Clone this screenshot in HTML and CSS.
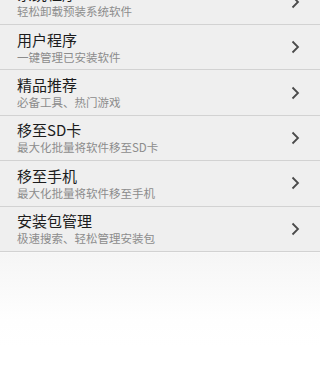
FILE: index.html
```html
<!DOCTYPE html>
<html>
<head>
    <meta charset="utf-8" />
    <title>软件管理</title>
    <link rel="stylesheet" href="styles.css">
</head>
<body>
<div class="page">
    <ul class="menu">
        <li class="menu-item">
            <div class="item-text">
                <div class="item-title">系统程序</div>
                <div class="item-desc">轻松卸载预装系统软件</div>
            </div>
            <svg class="arrow" width="9" height="14" viewBox="0 0 9 14"><polyline points="1.5,1.5 7,7 1.5,12.5" fill="none" stroke="#4a4a4a" stroke-width="1.8"/></svg>
        </li>
        <li class="menu-item">
            <div class="item-text">
                <div class="item-title">用户程序</div>
                <div class="item-desc">一键管理已安装软件</div>
            </div>
            <svg class="arrow" width="9" height="14" viewBox="0 0 9 14"><polyline points="1.5,1.5 7,7 1.5,12.5" fill="none" stroke="#4a4a4a" stroke-width="1.8"/></svg>
        </li>
        <li class="menu-item">
            <div class="item-text">
                <div class="item-title">精品推荐</div>
                <div class="item-desc">必备工具、热门游戏</div>
            </div>
            <svg class="arrow" width="9" height="14" viewBox="0 0 9 14"><polyline points="1.5,1.5 7,7 1.5,12.5" fill="none" stroke="#4a4a4a" stroke-width="1.8"/></svg>
        </li>
        <li class="menu-item">
            <div class="item-text">
                <div class="item-title">移至SD卡</div>
                <div class="item-desc">最大化批量将软件移至SD卡</div>
            </div>
            <svg class="arrow" width="9" height="14" viewBox="0 0 9 14"><polyline points="1.5,1.5 7,7 1.5,12.5" fill="none" stroke="#4a4a4a" stroke-width="1.8"/></svg>
        </li>
        <li class="menu-item">
            <div class="item-text">
                <div class="item-title">移至手机</div>
                <div class="item-desc">最大化批量将软件移至手机</div>
            </div>
            <svg class="arrow" width="9" height="14" viewBox="0 0 9 14"><polyline points="1.5,1.5 7,7 1.5,12.5" fill="none" stroke="#4a4a4a" stroke-width="1.8"/></svg>
        </li>
        <li class="menu-item">
            <div class="item-text">
                <div class="item-title">安装包管理</div>
                <div class="item-desc">极速搜索、轻松管理安装包</div>
            </div>
            <svg class="arrow" width="9" height="14" viewBox="0 0 9 14"><polyline points="1.5,1.5 7,7 1.5,12.5" fill="none" stroke="#4a4a4a" stroke-width="1.8"/></svg>
        </li>
    </ul>
</div>
</body>
</html>
```

FILE: styles.css
```css
html,body,ul,li,div{margin: 0;padding: 0;}
ul,li{list-style: none;}

body{width: 320px;height: 368px;overflow: hidden;font-family: "Noto Sans CJK SC", "Noto Sans", sans-serif;background: #fff;}
.page{height: 368px;background: linear-gradient(to bottom, #efefef 0, #efefef 253px, #f4f4f4 260px, #f9f9f9 300px, #fefefe 340px, #fff 368px);}
.menu{margin-top: -20.4px;}
.menu-item{display: flex;align-items: center;height: 44.4px;padding: 0 20px 0 17px;background: #efefef;border-bottom: 1px solid #d2d2d2;box-shadow: 0 1px 0 #f8f8f8;}
.item-text{flex: 1;}
.item-title{font-size: 15px;line-height: 19px;color: #1c1c1c;}
.item-desc{font-size: 11.5px;line-height: 15px;color: #8c8c8c;margin-top: 1px;}
.arrow{display: block;}
```
